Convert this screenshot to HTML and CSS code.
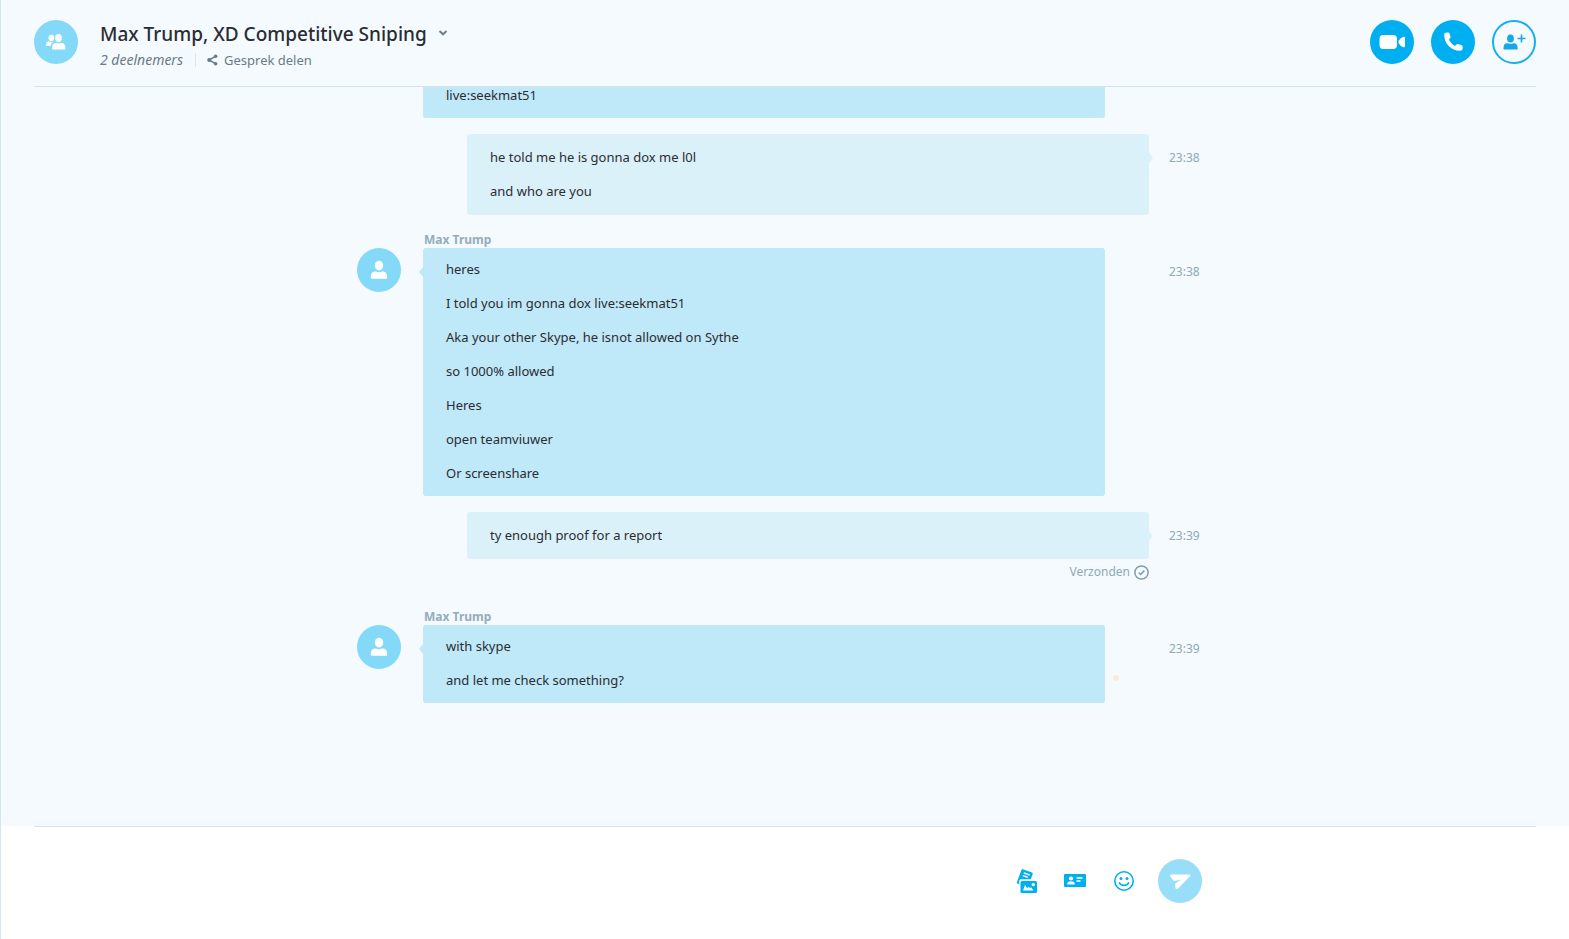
FILE: index.html
```html
<!DOCTYPE html>
<html lang="nl">
<head>
<meta charset="utf-8">
<meta name="viewport" content="width=device-width, initial-scale=1">
<title>Max Trump, XD Competitive Sniping</title>
<link rel="stylesheet" href="styles.css">
</head>
<body>
<svg class="symbols" aria-hidden="true">
  <symbol id="person" viewBox="0 0 18 20"><ellipse cx="9" cy="5.600" rx="4.200" ry="4.900"/><path d="M.8 17.600c0-4 1.700-6 4.400-6 1 0 1.600.6 3.800.6s2.800-.6 3.800-.6c2.700 0 4.400 2 4.400 6 0 .9-.4 1.200-1.100 1.200H1.900c-.7 0-1.100-.3-1.100-1.200z"/></symbol>
</svg>
<div class="app">
  <header class="header">
    <div class="avatar">
      <svg width="20" height="16" viewBox="0 0 20 16"><ellipse cx="5.300" cy="3.900" rx="2.800" ry="3.100"/><path d="M0 12c0-3 1-4.400 2.700-4.400.9 0 1.300.3 2.600.3.900 0 1.500-.2 2.200-.3C5.800 8.600 5 10 4.700 12z"/><ellipse cx="12.500" cy="4" rx="3.300" ry="3.900"/><path d="M6 14.500c0-3.700 1.300-5.400 3.500-5.400.9 0 1.300.4 3 .4s2.100-.4 3-.4c2.200 0 3.900 1.700 3.900 5.400 0 .7-.3 1-.9 1H6.900c-.6 0-.9-.3-.9-1z"/></svg>
    </div>
    <div class="heading">
      <h1 class="title"><button class="title-button" type="button">Max Trump, XD Competitive Sniping
        <svg class="chevron" width="10" height="8" viewBox="0 0 10 8"><path d="M1.500 1 5 4.300 8.500 1"/></svg></button></h1>
      <div class="meta">
        <a class="members" href="#members">2 deelnemers</a>
        <a class="share" href="#share">
          <svg width="11" height="12" viewBox="0 0 11 12"><path class="share-line" d="M8.500 2.300 2 6l6.500 3.700"/><circle cx="8.600" cy="2.200" r="1.800"/><circle cx="2.200" cy="6" r="2"/><circle cx="8.600" cy="9.800" r="1.800"/></svg>Gesprek delen</a>
      </div>
    </div>
    <div class="actions">
      <button class="round" type="button" aria-label="Videogesprek"><svg width="28" height="16" viewBox="0 0 28 16"><path d="M5 1h10q4 0 4 4v6q0 4-4 4H5q-3.500 0-3.500-4V5Q1.500 1 5 1zM20.500 7q2-3.600 5-4.300 1.500-.2 1.500 1v8.600q0 1.200-1.500 1-3-.7-5-4.300z"/></svg></button>
      <button class="round" type="button" aria-label="Bellen"><svg width="24" height="22" viewBox="-1 0 24 22"><path d="M3.600 1.700 5.600 1.400Q7 1.200 7.500 2.600l1 2.800Q8.900 6.800 7.800 7.600L6.900 8.500c1.300 3 3.200 4.800 6.200 6.500l1.100-1.200q1-1 2.300-.6l2.800.9q1.500.5 1.400 1.900l-.2 2.200q-.2 1.300-1.600 1.400C10 20.200 2 13 2.200 3.400q0-1.400 1.400-1.700z"/></svg></button>
      <button class="round round-outline" type="button" aria-label="Personen toevoegen"><svg width="24" height="18" viewBox="0 0 24 18"><ellipse cx="8.500" cy="5.500" rx="3.400" ry="3.900"/><path d="M1.500 15.500c0-3.600 1.400-5.200 3.600-5.200.9 0 1.500.5 3.400.5s2.500-.5 3.400-.5c2.200 0 3.800 1.600 3.800 5.200 0 .7-.2 1-.8 1H2.300c-.6 0-.8-.3-.8-1zM18.700 1.500h1.600v3.200h3.200v1.600h-3.200v3.200h-1.600v-3.200h-3.200v-1.600h3.200z"/></svg></button>
    </div>
  </header>

  <main class="messages">
    <section class="group incoming">
      <div class="bubble bubble-plain"><p>live:seekmat51</p></div>
    </section>
    <section class="group outgoing">
      <div class="bubble"><p>he told me he is gonna dox me l0l</p><p>and who are you</p></div>
      <time>23:38</time>
    </section>
    <section class="group incoming named">
      <div class="avatar"><svg width="18" height="20"><use href="#person"/></svg></div>
      <h2 class="name">Max Trump</h2>
      <div class="bubble"><p>heres</p><p>I told you im gonna dox live:seekmat51</p><p>Aka your other Skype, he isnot allowed on Sythe</p><p>so 1000% allowed</p><p>Heres</p><p>open teamviuwer</p><p>Or screenshare</p></div>
      <time>23:38</time>
    </section>
    <section class="group outgoing">
      <div class="bubble"><p>ty enough proof for a report</p></div>
      <time>23:39</time>
      <div class="status">Verzonden
        <svg width="15" height="15" viewBox="0 0 15 15"><circle cx="7.500" cy="7.500" r="6.600"/><path d="m4.700 7.700 1.900 1.700 3.800-3.800"/></svg></div>
    </section>
    <section class="group incoming named last">
      <div class="avatar"><svg width="18" height="20"><use href="#person"/></svg></div>
      <h2 class="name">Max Trump</h2>
      <div class="bubble"><p>with skype</p><p>and let me check something?</p><span class="dot"></span></div>
      <time>23:39</time>
    </section>
  </main>

  <footer class="composer">
    <form class="composer-row">
      <textarea class="input" rows="1" aria-label="Typ hier een bericht"></textarea>
      <div class="tools">
        <button type="button" aria-label="Bestand verzenden"><svg width="22" height="26" viewBox="0 0 22 26"><path d="M6.800 1.300 16 4.600q1 .4.700 1.300L14.800 11.300H5q-1.800 0-1.800 1.800v3.100L1.600 15.600Q.5 15.200.9 14.200L5.400 2Q5.800 1 6.800 1.300z"/><path class="cut" d="m7.800 4.900 6 2.200M6.900 7.600l5 1.800"/><path d="M6 13h13.500q1.500 0 1.500 1.500v9q0 1.500-1.500 1.500H6q-1.500 0-1.500-1.500v-9Q4.500 13 6 13z"/><path class="hole" d="m7 22.500 2-5.500 2.200 3.300 1.600-1.600 1.400 1.600 1.200-1 1.900 3.200z"/><circle class="hole" cx="17.300" cy="16.600" r="1.700"/></svg></button>
        <button type="button" aria-label="Contact verzenden"><svg width="22" height="14" viewBox="0 0 22 14"><rect width="22" height="13" rx="1"/><circle class="hole" cx="7" cy="4.500" r="2.100"/><path class="hole" d="M3.200 10.500q0-3 2.400-3h2.800q2.400 0 2.400 3z"/><path class="cut" d="M12.500 4h6M12.500 7h4"/></svg></button>
        <button type="button" aria-label="Emoticons"><svg width="22" height="22" viewBox="0 0 22 22"><circle class="line" cx="12" cy="11" r="9.200"/><circle cx="9" cy="8.400" r="1.500"/><circle cx="15" cy="8.400" r="1.500"/><path class="line" d="M7 12.400q1.500 3 5 3t5-3"/></svg></button>
      </div>
      <button class="round send" type="submit" aria-label="Verzenden"><svg width="22" height="18" viewBox="0 0 22 18"><path d="M2.500 2.500H20q2 .2 1 1.800L9 16.500Q6.700 18.200 6.400 15.800L6.200 11.500 12 7.700 5 9 1.300 4.500Q.5 2.600 2.500 2.500z"/></svg></button>
    </form>
  </footer>
</div>
</body>
</html>
```
FILE: styles.css
```css
* { box-sizing: border-box; }

body {
  margin: 0;
  background: #fff;
  color: #2b2c33;
  font-family: "Noto Sans", "Segoe UI", sans-serif;
}

button {
  padding: 0;
  border: 0;
  background: none;
  color: inherit;
  font: inherit;
  cursor: pointer;
}

h1, h2, p { margin: 0; }
a { color: inherit; text-decoration: none; }
svg { display: block; fill: currentColor; }
.symbols { position: absolute; width: 0; height: 0; }

.app {
  display: flex;
  flex-direction: column;
  height: 100vh;
  border-left: 1px solid #d2e6f0;
  background: #f4fafd;
}

.header {
  display: flex;
  align-items: flex-start;
  flex: none;
  height: 87px;
  margin: 0 33px;
  padding-top: 20px;
  border-bottom: 1px solid #d3e4ee;
}

.avatar, .round {
  display: flex;
  align-items: center;
  justify-content: center;
  flex: none;
  width: 44px;
  height: 44px;
  border-radius: 50%;
  background: #84d9f9;
  color: #fff;
}

.heading { flex: 1; min-width: 0; padding-left: 22px; }
.title { font-size: 19px; font-weight: 500; line-height: 28px; }
.title-button { display: flex; align-items: center; gap: 11px; white-space: nowrap; }
.chevron { fill: none; stroke: #6e7f91; stroke-width: 2; }

.meta {
  display: flex;
  align-items: center;
  padding-top: 2px;
  color: #6b7a8a;
  font-size: 13px;
  line-height: 20px;
}
.members { font-size: 14px; font-style: italic; }
.share {
  display: flex;
  align-items: center;
  gap: 6px;
  margin-left: 12px;
  padding-left: 11px;
  border-left: 1px solid #dde6ee;
  line-height: 14px;
}
.share-line { fill: none; stroke: currentColor; stroke-width: 1.500; }

.actions { display: flex; gap: 17px; }
.actions .round { background: #00aff0; }
.actions .round-outline { border: 2px solid #14b0ec; background: none; color: #14a8ea; }

.messages {
  display: flex;
  flex-direction: column;
  justify-content: flex-end;
  flex: 1;
  gap: 16px;
  min-height: 0;
  padding: 0 33px 123px;
  overflow: hidden;
}

.group {
  display: grid;
  grid-template-columns: 66px 44px minmax(0, 1fr) 44px 64px;
  width: 100%;
  max-width: 856px;
  margin: 0 auto;
}
.group .avatar { grid-area: 2 / 1; }
.group time {
  grid-area: 2 / 5;
  padding: 14px 0 0 20px;
  color: #8fa9b7;
  font-size: 12px;
  line-height: 20px;
}
.name {
  grid-area: 1 / 2 / 2 / 4;
  padding-left: 1px;
  color: #93adbb;
  font-size: 12px;
  font-weight: 700;
  line-height: 17px;
}
.bubble {
  position: relative;
  border-radius: 3px;
  font-size: 13px;
  line-height: 34px;
}
.incoming .bubble {
  grid-area: 2 / 2 / 3 / 4;
  padding: 4px 23px 6px;
  background: #bfe8f8;
}
.outgoing .bubble {
  grid-area: 2 / 3 / 3 / 5;
  padding: 6px 23px 7px;
  background: #dbf1fa;
}
.bubble::before {
  content: "";
  position: absolute;
  top: 19px;
  border: 5px solid transparent;
}
.incoming .bubble::before { right: 100%; border-left-width: 0; border-right: 4px solid #bfe8f8; }
.outgoing .bubble::before { left: 100%; border-right-width: 0; border-left: 4px solid #dbf1fa; }
.bubble.bubble-plain::before { display: none; }

.status {
  grid-area: 3 / 3 / 4 / 5;
  display: flex;
  justify-content: flex-end;
  align-items: center;
  gap: 4px;
  padding-top: 3px;
  color: #8fa9b7;
  font-size: 12px;
  line-height: 20px;
}
.status svg { fill: none; stroke: #7f9fae; stroke-width: 1.500; }
.last { padding-top: 10px; }

.dot {
  position: absolute;
  right: -14px;
  bottom: 22px;
  width: 6px;
  height: 6px;
  border-radius: 50%;
  background: #f7ecdc;
}

.composer {
  flex: none;
  padding: 0 33px 36px;
  background: #fff;
}
.composer::before {
  content: "";
  display: block;
  margin-bottom: 32px;
  border-top: 1px solid #d3e4ee;
}
.composer-row {
  display: flex;
  align-items: center;
  max-width: 856px;
  margin: 0 auto;
  padding: 0 11px 0 66px;
}
.input {
  flex: 1;
  min-width: 0;
  height: 24px;
  padding: 0;
  border: 0;
  outline: 0;
  resize: none;
  background: none;
  color: inherit;
  font: inherit;
  font-size: 13px;
}
.tools { display: flex; align-items: center; gap: 26px; margin: 0 24px; color: #00aff0; }
.cut { fill: none; stroke: #fff; stroke-width: 1.500; }
.hole { fill: #fff; }
.line { fill: none; stroke: currentColor; stroke-width: 1.600; }
.send { background: #99def9; }
```
